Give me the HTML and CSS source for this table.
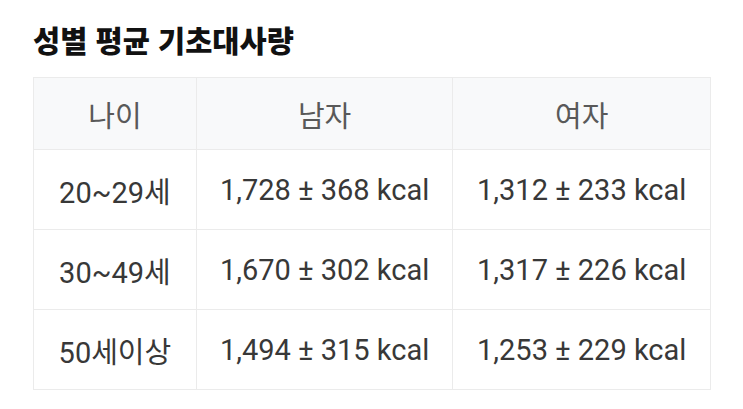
FILE: index.html
```html
<!DOCTYPE html>
<html lang="ko">
<head>
<meta charset="utf-8">
<link rel="stylesheet" href="styles.css">
</head>
<body>
<div class="wrap">
  <h2 class="title">성별 평균 기초대사량</h2>
  <table class="bmr">
    <thead>
      <tr><th class="c1">나이</th><th class="c2">남자</th><th class="c3">여자</th></tr>
    </thead>
    <tbody>
      <tr><td>20~29세</td><td>1,728 ± 368 kcal</td><td>1,312 ± 233 kcal</td></tr>
      <tr><td>30~49세</td><td>1,670 ± 302 kcal</td><td>1,317 ± 226 kcal</td></tr>
      <tr><td>50세이상</td><td>1,494 ± 315 kcal</td><td>1,253 ± 229 kcal</td></tr>
    </tbody>
  </table>
</div>
</body>
</html>
```
FILE: styles.css
```css
html, body {
  margin: 0;
  padding: 0;
  background: #ffffff;
}
.wrap {
  padding: 19px 32px 0 33px;
  font-family: Roboto, "Noto Sans CJK KR", sans-serif;
}
.title {
  margin: 0 0 18px 0;
  font-family: "Noto Sans CJK KR", sans-serif;
  font-size: 29.5px;
  font-weight: 900;
  line-height: 40px;
  color: #111111;
  letter-spacing: 0;
}
.bmr {
  border-collapse: collapse;
  table-layout: fixed;
}
.bmr th, .bmr td {
  border: 1px solid #ebebeb;
  text-align: center;
  padding: 0;
  font-size: 29px;
}
.bmr th {
  background: #f8f9fa;
  font-weight: 400;
  color: #595959;
  height: 71px;
}
.bmr td {
  color: #383838;
  height: 79px;
}
.c1 { width: 162px; }
.c2 { width: 256px; }
.c3 { width: 257px; }
```
